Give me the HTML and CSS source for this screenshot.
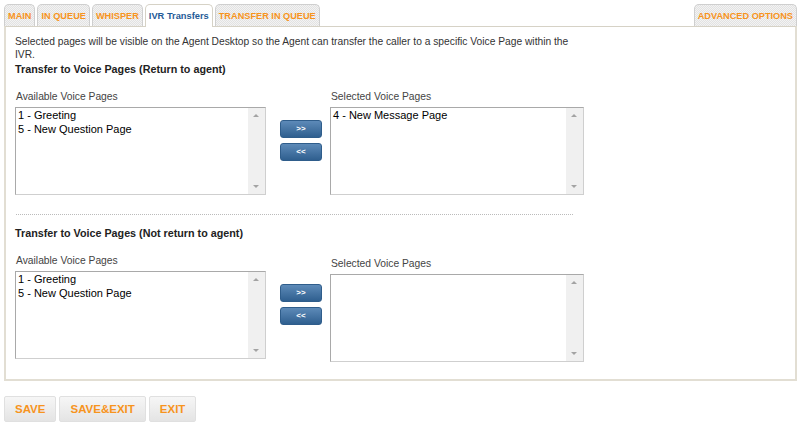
FILE: index.html
```html
<!DOCTYPE html>
<html>
<head>
<meta charset="utf-8">
<link rel="stylesheet" href="styles.css">
</head>
<body>
<div class="tabs">
  <div class="tab">MAIN</div>
  <div class="tab">IN QUEUE</div>
  <div class="tab">WHISPER</div>
  <div class="tab active">IVR Transfers</div>
  <div class="tab">TRANSFER IN QUEUE</div>
  <div class="spacer"></div>
  <div class="tab">ADVANCED OPTIONS</div>
</div>
<div class="panel">
  <p class="desc">Selected pages will be visible on the Agent Desktop so the Agent can transfer the caller to a specific Voice Page within the IVR.</p>
  <div class="section">
    <h3 class="title">Transfer to Voice Pages (Return to agent)</h3>
    <div class="pickers">
      <div class="col">
        <div class="label">Available Voice Pages</div>
        <div class="listbox">
          <div class="items"><div>1 - Greeting</div><div>5 - New Question Page</div></div>
          <div class="scroll"><span class="up"></span><span class="down"></span></div>
        </div>
      </div>
      <div class="moves">
        <button class="mv">&gt;&gt;</button>
        <button class="mv">&lt;&lt;</button>
      </div>
      <div class="col">
        <div class="label">Selected Voice Pages</div>
        <div class="listbox wide">
          <div class="items"><div>4 - New Message Page</div></div>
          <div class="scroll"><span class="up"></span><span class="down"></span></div>
        </div>
      </div>
    </div>
  </div>
  <div class="sep"></div>
  <div class="section">
    <h3 class="title">Transfer to Voice Pages (Not return to agent)</h3>
    <div class="pickers">
      <div class="col">
        <div class="label">Available Voice Pages</div>
        <div class="listbox">
          <div class="items"><div>1 - Greeting</div><div>5 - New Question Page</div></div>
          <div class="scroll"><span class="up"></span><span class="down"></span></div>
        </div>
      </div>
      <div class="moves">
        <button class="mv">&gt;&gt;</button>
        <button class="mv">&lt;&lt;</button>
      </div>
      <div class="col low">
        <div class="label">Selected Voice Pages</div>
        <div class="listbox wide">
          <div class="items"></div>
          <div class="scroll"><span class="up"></span><span class="down"></span></div>
        </div>
      </div>
    </div>
  </div>
</div>
<div class="actions">
  <button class="act">SAVE</button>
  <button class="act">SAVE&amp;EXIT</button>
  <button class="act">EXIT</button>
</div>
</body>
</html>
```
FILE: styles.css
```css
* { box-sizing: border-box; }
body {
  margin: 0;
  padding: 4px 3px 0 4px;
  font-family: "Liberation Sans", Arial, sans-serif;
  color: #333;
  background: #fff;
  width: 800px;
}
.tabs {
  display: flex;
  align-items: flex-end;
  gap: 2px;
  height: 22px;
  position: relative;
  z-index: 1;
}
.spacer { flex: 1; }
.tab {
  height: 22px;
  padding: 0 3px;
  border: 1px solid #cfcfcf;
  border-bottom: none;
  border-radius: 5px 5px 0 0;
  background-color: #ececec;
  background-image: repeating-conic-gradient(#e2e2e2 0 25%, #f3f3f3 0 50%);
  background-size: 2px 2px;
  color: #f7941d;
  font-weight: bold;
  font-size: 9.2px;
  line-height: 22px;
}
.tab.active {
  background: #fff;
  color: #1f5b97;
  height: 23px;
  margin-bottom: -1px;
  padding: 0 3px;
  font-size: 9.3px;
  border-color: #d6d2c6;
}
.panel {
  border: 2px solid #e2ded3;
  border-top: 1px solid #d6d2c6;
  height: 355px;
  padding: 8px 0 0 9px;
}
.desc {
  margin: 0;
  width: 570px;
  font-size: 10.25px;
  line-height: 13px;
  color: #333;
}
.title {
  margin: 2px 0 0;
  font-size: 10.75px;
  font-weight: bold;
  color: #222;
  line-height: 13px;
}
.pickers {
  display: flex;
  align-items: flex-start;
  margin-top: 14px;
}
.label {
  font-size: 10.3px;
  color: #444;
  line-height: 13px;
  margin-bottom: 4px;
  padding-left: 1px;
}
.col.low { margin-top: 3px; }
.listbox {
  display: flex;
  width: 251px;
  height: 88px;
  border: 1px solid #aaa;
  border-color: #a9a9a9 #cfcfcf #cfcfcf #a9a9a9;
  background: #fff;
}
.listbox.wide { width: 254px; }
.items {
  flex: 1;
  padding: 0 0 0 2px;
  font-size: 11px;
  line-height: 14px;
  color: #000;
}
.scroll {
  width: 17px;
  background: #f0f0f0;
  position: relative;
}
.up, .down {
  position: absolute;
  left: 5px;
  width: 0;
  height: 0;
  border-left: 3px solid transparent;
  border-right: 3px solid transparent;
}
.up { top: 6px; border-bottom: 3px solid #a3a3a3; }
.down { bottom: 6px; border-top: 3px solid #a3a3a3; }
.moves {
  display: flex;
  flex-direction: column;
  gap: 5px;
  width: 64px;
  padding: 30px 0 0 14px;
}
.mv {
  width: 42px;
  height: 18px;
  padding: 0;
  border: 1px solid #2f5d8b;
  border-radius: 3px;
  background: linear-gradient(#5d8ab8, #2f5f8f);
  color: #fff;
  font-family: "Liberation Sans", Arial, sans-serif;
  font-size: 8px;
  font-weight: bold;
  line-height: 16px;
}
.sep {
  width: 557px;
  margin: 19px 0 12px 1px;
  border-top: 1px dotted #bbb;
}
.actions {
  display: flex;
  gap: 3px;
  margin-top: 15px;
}
.act {
  height: 26px;
  padding: 0 10px;
  border: 1px solid #e0e0e0;
  border-radius: 2px;
  background: linear-gradient(#f6f6f6, #e4e4e4);
  color: #f7941d;
  font-family: "Liberation Sans", Arial, sans-serif;
  font-weight: bold;
  font-size: 11.5px;
}
```
